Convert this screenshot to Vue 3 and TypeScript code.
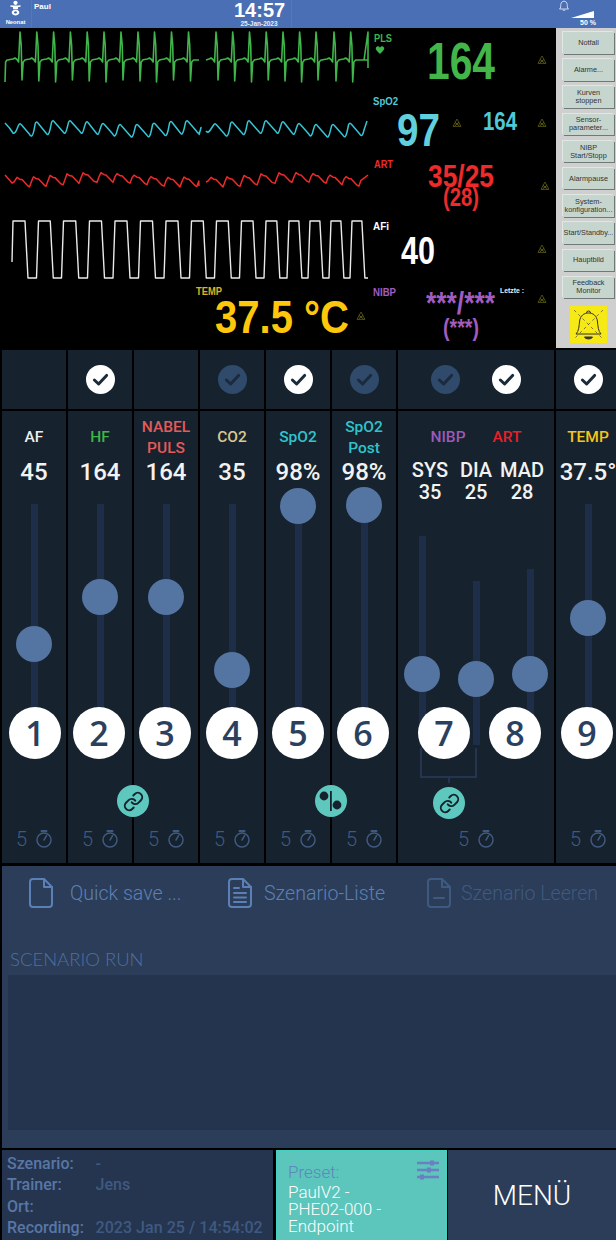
<template>
  <div class="page">
    <header class="topbar">
      <div class="patient">
        <svg class="baby" viewBox="0 0 16 18" fill="#fff">
          <circle cx="8" cy="2.6" r="2.6" />
          <path d="M2 5.6 L5 6 H11 L14 5.6 L14.6 7 L11 8.2 V10.4 H5 V8.2 L1.4 7 Z" />
          <path d="M8 11 a4.6 3.6 0 1 0 .01 0 Z M8 13 a1.8 1.4 0 1 1 -.01 0 Z" fill-rule="evenodd" />
        </svg>
        <span>Neonat</span>
      </div>
      <div class="pname">Paul</div>
      <div class="clock">
        <div class="time">14:57</div>
        <div class="date">25-Jan-2023</div>
      </div>
      <div class="volume">
        <svg class="bell" viewBox="0 0 12 12" fill="none" stroke="#dfe7f5" stroke-width="0.9">
          <path d="M1.5 9 C3 8 2.6 6 2.8 4.4 C3 2.4 4.4 1.2 6 1.2 C7.6 1.2 9 2.4 9.2 4.4 C9.4 6 9 8 10.5 9 Z" />
          <path d="M4.8 10.2 H7.2" />
        </svg>
        <svg class="vol" viewBox="0 0 23 7"><path d="M0 7 L23 0 V7 Z" fill="#fff" /></svg>
        <span>50 %</span>
      </div>
    </header>

    <section class="monitor">
      <svg class="screen" width="556" height="320" viewBox="0 28 556 320">
        <path v-for="w in waves" :key="w.key" :d="w.d" :stroke="w.color" :stroke-width="w.sw" fill="none" stroke-linejoin="round" />
        <path d="M376 47.5 c1.6 -2.4 4 -1.2 4 .6 c0 -1.8 2.4 -3 4 -.6 c1.2 2.2 -2.4 4.6 -4 6.4 c-1.6 -1.8 -5.2 -4.2 -4 -6.4 Z" fill="#3fb54a" />
        <text
          v-for="t in readouts"
          :key="t.text + t.x"
          :x="t.x"
          :y="t.y"
          :font-size="t.size"
          :fill="t.color"
          :textLength="t.width"
          lengthAdjust="spacingAndGlyphs"
          class="vital"
        >{{ t.text }}</text>
        <g v-for="a in alarmOff" :key="a[0] + '-' + a[1]" :transform="`translate(${a[0]} ${a[1]})`" fill="none" stroke="#6b6a18" stroke-width="0.7">
          <path d="M0 -4 L4 3.4 H-4 Z" />
          <path d="M-2.2 -1 L2.6 3.4 M2.2 -1 L-2.6 3.4 M-1.6 1 H1.6" />
        </g>
      </svg>
      <aside class="softkeys">
        <button v-for="k in softkeys" :key="k" class="softkey">{{ k }}</button>
        <div class="alarm-box">
          <svg viewBox="0 0 37 37" fill="none" stroke="#333" stroke-width="1">
            <path d="M4 4 L33 33 M33 4 L4 33" stroke-dasharray="3 3" stroke-width="0.6" />
            <path d="M6 28 C9 25 9 20 9.6 15 C10.4 9.6 14 7 18.5 7 C23 7 26.6 9.6 27.4 15 C28 20 28 25 31 28 Z" />
            <path d="M16.5 7 a2 2 0 0 1 4 0" />
            <path d="M14.5 31 H22.5 C21.5 33.6 15.5 33.6 14.5 31 Z" fill="#333" />
          </svg>
        </div>
      </aside>
    </section>

    <section class="mixer">
      <div v-for="c in cols" :key="'chk' + c.key" class="check-cell" :class="c.cls">
        <span v-for="(on, i) in c.checks" :key="i" class="check" :class="{ on }">
          <svg viewBox="0 0 29 29" fill="none" stroke-width="3" stroke-linecap="round" stroke-linejoin="round">
            <path d="M8.4 15 L12.6 19 L20.6 10.4" />
          </svg>
        </span>
      </div>

      <div v-for="c in cols" :key="c.key" class="col" :class="c.cls">
        <div class="head">
          <span v-for="l in c.labels" :key="l.text" class="label" :style="{ color: l.color }" v-html="l.text"></span>
        </div>
        <div class="vals">
          <div v-for="v in c.values" :key="v.value" class="val">
            <div v-if="v.name" class="val-name">{{ v.name }}</div>
            <div class="val-num" :class="{ small: v.name }">{{ v.value }}</div>
          </div>
        </div>
        <div class="tracks">
          <div v-for="t in c.tracks" :key="t.top" class="track" :style="{ height: 744 - t.top + 'px' }">
            <span class="thumb" :style="{ top: t.thumb - t.top - 18 + 'px' }"></span>
          </div>
        </div>
        <div class="foot">
          <span>5</span>
          <svg class="timer" viewBox="0 0 16 18" fill="none" stroke="#3f5a80" stroke-width="1.5" stroke-linecap="round">
            <circle cx="8" cy="10" r="7" />
            <path d="M5.4 1 H10.6" stroke-width="1.8" />
            <path d="M8 10 L10.6 5.6" />
          </svg>
        </div>
        <span v-for="m in c.marks" :key="m.n" class="mark" :style="{ left: m.left + 'px' }">{{ m.n }}</span>
      </div>

      <div class="bracket"></div>
      <span class="pill pill-hf">
        <svg viewBox="0 0 24 24" fill="none" stroke="#16222d" stroke-width="2.2" stroke-linecap="round" stroke-linejoin="round"><path d="M10 13a5 5 0 0 0 7.54.54l3-3a5 5 0 0 0-7.07-7.07l-1.72 1.71" /><path d="M14 11a5 5 0 0 0-7.54-.54l-3 3a5 5 0 0 0 7.07 7.07l1.71-1.71" /></svg>
      </span>
      <span class="pill pill-spo2">
        <svg viewBox="0 0 32 32" fill="#16222d"><circle cx="9" cy="11" r="4.4" /><circle cx="22" cy="20" r="4.4" /><rect x="15" y="6" width="1.8" height="20" /></svg>
      </span>
      <span class="pill pill-nibp">
        <svg viewBox="0 0 24 24" fill="none" stroke="#16222d" stroke-width="2.2" stroke-linecap="round" stroke-linejoin="round"><path d="M10 13a5 5 0 0 0 7.54.54l3-3a5 5 0 0 0-7.07-7.07l-1.72 1.71" /><path d="M14 11a5 5 0 0 0-7.54-.54l-3 3a5 5 0 0 0 7.07 7.07l1.71-1.71" /></svg>
      </span>
    </section>

    <section class="scenario">
      <div class="actions">
        <div v-for="a in actions" :key="a.label" class="action" :class="{ dim: a.dim }">
          <svg viewBox="0 0 24 30" fill="none" stroke="currentColor" stroke-width="2" stroke-linejoin="round" stroke-linecap="round">
            <path d="M15 1 H4 a3 3 0 0 0 -3 3 V26 a3 3 0 0 0 3 3 H20 a3 3 0 0 0 3 -3 V9 Z" />
            <path d="M15 1 V9 H23" />
            <path v-if="a.kind === 'list'" d="M6 10 H11 M6 15 H18 M6 19.5 H18 M6 24 H18" />
            <path v-if="a.kind === 'clear'" d="M7 20 H17" />
          </svg>
          <span>{{ a.label }}</span>
        </div>
      </div>
      <div class="run-title">SCENARIO RUN</div>
      <div class="run-box"></div>
    </section>

    <footer class="bottom">
      <div class="info">
        <template v-for="r in info" :key="r[0]">
          <span class="info-key">{{ r[0] }}</span>
          <span class="info-val">{{ r[1] }}</span>
        </template>
      </div>
      <div class="preset">
        <div class="preset-head">
          <span>Preset:</span>
          <svg viewBox="0 0 22 20" fill="none" stroke="#6a80c0" stroke-width="2.4">
            <path d="M0 3 H22 M0 10 H22 M0 17 H22" />
            <path d="M15 0.5 V5.5 M12 7.5 V12.5 M5 14.5 V19.5" stroke-width="4" />
          </svg>
        </div>
        <div class="preset-name">PaulV2 -<br />PHE02-000 -<br />Endpoint</div>
      </div>
      <div class="menu">MENÜ</div>
    </footer>
  </div>
</template>

<script setup lang="ts">
interface Label { text: string; color: string }
interface Value { name?: string; value: string }
interface Track { top: number; thumb: number }
interface Mark { n: number; left: number }
interface Col {
  key: string
  cls?: string
  checks: boolean[]
  labels: Label[]
  values: Value[]
  tracks: Track[]
  marks: Mark[]
}

const GREEN = '#3fb54a'
const CYAN = '#2fc4cc'

const cols: Col[] = [
  { key: 'af', checks: [], labels: [{ text: 'AF', color: '#eee' }], values: [{ value: '45' }], tracks: [{ top: 504, thumb: 644 }], marks: [{ n: 1, left: 7 }] },
  { key: 'hf', checks: [true], labels: [{ text: 'HF', color: GREEN }], values: [{ value: '164' }], tracks: [{ top: 504, thumb: 597 }], marks: [{ n: 2, left: 5 }] },
  { key: 'nabel', checks: [], labels: [{ text: 'NABEL<br>PULS', color: '#e35b5b' }], values: [{ value: '164' }], tracks: [{ top: 504, thumb: 597 }], marks: [{ n: 3, left: 5 }] },
  { key: 'co2', checks: [false], labels: [{ text: 'CO2', color: '#d9c88f' }], values: [{ value: '35' }], tracks: [{ top: 504, thumb: 670 }], marks: [{ n: 4, left: 6 }] },
  { key: 'spo2', checks: [true], labels: [{ text: 'SpO2', color: CYAN }], values: [{ value: '98%' }], tracks: [{ top: 504, thumb: 506 }], marks: [{ n: 5, left: 6 }] },
  { key: 'post', checks: [false], labels: [{ text: 'SpO2<br>Post', color: CYAN }], values: [{ value: '98%' }], tracks: [{ top: 504, thumb: 505 }], marks: [{ n: 6, left: 5 }] },
  {
    key: 'bp',
    cls: 'group',
    checks: [false, true],
    labels: [{ text: 'NIBP', color: '#9c5ab8' }, { text: 'ART', color: '#e8202a' }],
    values: [{ name: 'SYS', value: '35' }, { name: 'DIA', value: '25' }, { name: 'MAD', value: '28' }],
    tracks: [{ top: 535, thumb: 673 }, { top: 580, thumb: 678 }, { top: 568, thumb: 673 }],
    marks: [{ n: 7, left: 20 }, { n: 8, left: 91 }],
  },
  { key: 'temp', cls: 'last', checks: [true], labels: [{ text: 'TEMP', color: '#f5c518' }], values: [{ value: '37.5°' }], tracks: [{ top: 504, thumb: 618 }], marks: [{ n: 9, left: 5 }] },
]

const softkeys = [
  'Notfall', 'Alarme...', 'Kurven stoppen', 'Sensor-parameter...', 'NIBP Start/Stopp',
  'Alarmpause', 'System-konfiguration...', 'Start/Standby...', 'Hauptbild', 'Feedback Monitor',
]

const actions = [
  { label: 'Quick save ...', kind: 'plain', dim: false },
  { label: 'Szenario-Liste', kind: 'list', dim: false },
  { label: 'Szenario Leeren', kind: 'clear', dim: true },
]

const info = [
  ['Szenario:', '-'],
  ['Trainer:', 'Jens'],
  ['Ort:', ''],
  ['Recording:', '2023 Jan 25 / 14:54:02'],
]

const readouts = [
  { text: 'PLS', x: 374, y: 41.5, size: 11, width: 18, color: GREEN },
  { text: '164', x: 427, y: 79, size: 52, width: 68, color: '#43b649' },
  { text: 'SpO2', x: 373, y: 105, size: 11, width: 25, color: '#4fc9d9' },
  { text: '97', x: 397, y: 146, size: 47, width: 43, color: '#62cfdc' },
  { text: '164', x: 483, y: 129.5, size: 25, width: 34, color: '#4fc9d9' },
  { text: 'ART', x: 374, y: 167.5, size: 11, width: 19, color: '#ee2a2a' },
  { text: '35/25', x: 428, y: 187, size: 31, width: 66, color: '#ee2a2a' },
  { text: '(28)', x: 443, y: 206, size: 25, width: 36, color: '#ee2a2a' },
  { text: 'AFi', x: 373, y: 230, size: 11, width: 16, color: '#fff' },
  { text: '40', x: 401, y: 264, size: 39, width: 34, color: '#fff' },
  { text: 'NIBP', x: 373, y: 295.5, size: 11, width: 23, color: '#a05cc0' },
  { text: '***/***', x: 426, y: 314, size: 31, width: 69, color: '#a05cc0' },
  { text: '(***)', x: 443, y: 336, size: 24, width: 36, color: '#a05cc0' },
  { text: 'Letzte :', x: 500, y: 293, size: 7, width: 24, color: '#eee' },
  { text: 'TEMP', x: 196, y: 295, size: 10, width: 26, color: '#e0b020' },
  { text: '37.5 °C', x: 215, y: 333, size: 47, width: 134, color: '#fdc70c' },
]

const alarmOff: [number, number][] = [[542, 60], [457, 123], [542, 123], [545, 186], [542, 249], [542, 299], [361, 316]]

// ECG trace: flat baseline with a sharp up/down spike per beat
const ecg = (start: number, end: number, beats: number[], first: string) => {
  let d = first
  beats.forEach((b, i) => {
    const low = 80 + ((i * 7) % 3)
    if (b - 12 > start) d += ` L${b - 12} 60 L${b - 10} 59.5`
    d += ` L${b - 7} 59 L${b - 5} 58 L${b - 3} 59.5 L${b - 1.4} 62 L${b} 32 L${b + 1.2} 45`
    d += ` L${b + 2} ${low} L${b + 3.2} 62 L${b + 5} 60`
  })
  if (end > beats[beats.length - 1] + 5) d += ` L${end} 60`
  return d
}

// pleth trace: pointed wave that drifts up and down slowly
const pleth = (peaks: number[], first: string, end: string) => {
  let d = first
  peaks.forEach((p, i) => {
    const top = 123 + Math.sin(i * 0.82 + 2.6) * 2
    const next = peaks[i + 1] ?? p + 16.8
    d += ` L${p - 1.4} ${top + 1} Q${p} ${top - 1.6} ${p + 1.4} ${top + 0.8} L${next - 7} ${top + 10.5}`
    d += ` Q${next - 4.6} ${top + 15} ${next - 2.8} ${top + 6.5}`
  })
  return d + ' ' + end
}

// arterial trace: fast rise, small notch, then a long fall
const art = (peaks: number[], first: string, end: string) => {
  let d = first
  peaks.forEach((p, i) => {
    const drift = Math.sin(i * 0.68 + 1.6) * 2.4
    const top = 175 + drift
    const next = peaks[i + 1] ?? p + 16.8
    d += ` L${p} ${top} L${p + 3} ${top + 2} L${p + 5} ${top + 2.2} L${p + 11} ${top + 8.5} L${next - 4} ${top + 9.5} L${next - 2} ${top + 4}`
  })
  return d + ' ' + end
}

// breathing trace: trapezoid pulses
const resp = () => {
  const rises = [13, 38.5, 63.5, 89.5, 115, 140.5, 166, 191.5, 216.5, 241.5, 266, 289, 310, 331, 352]
  let d = 'M12 262 L13 221'
  rises.forEach((r, i) => {
    const period = (rises[i + 1] ?? r + 21) - r
    const topW = period * 0.47
    d += ` L${r + 0.5} 221 L${r + topW} 221 L${r + topW + 3} 278`
    if (rises[i + 1]) d += ` L${rises[i + 1] - 2} 278 L${rises[i + 1]} 221`
  })
  return d + ' L368 278'
}

const waves = [
  { key: 'ecg1', color: '#3fb54a', sw: 1.6, d: ecg(5, 199, [20, 36.8, 53.6, 70.4, 87.2, 104, 121, 138, 154.5, 171.5, 188.5], 'M5 82 L5.6 62 L7 60') },
  { key: 'ecg2', color: '#3fb54a', sw: 1.6, d: ecg(206, 368, [216, 232.7, 249.5, 266.2, 283, 299.6, 316, 334, 350.7], 'M206 60') + ' L364 60 L368 32 L368 68' },
  { key: 'pl1', color: '#36c5d6', sw: 1.5, d: pleth([20, 36.7, 53, 70, 87, 103, 120, 137, 154, 171, 187], 'M5 123 Q10 128 13 133 Q15 134 17 129', 'L199 135') },
  { key: 'pl2', color: '#36c5d6', sw: 1.5, d: pleth([215, 232, 249, 266, 283, 299, 316, 333, 350], 'M206 131 Q208 134 211 129', 'L367 121') },
  { key: 'ar1', color: '#ee2a2a', sw: 1.5, d: art([17, 33.5, 50, 67, 83, 101, 117, 134, 151, 168, 184], 'M5 175 L12 183 L14 182', 'L199 186') },
  { key: 'ar2', color: '#ee2a2a', sw: 1.5, d: art([211, 227, 244, 261, 279, 296, 313, 330, 346], 'M206 182 L208 181', 'L368 175') },
  { key: 'resp', color: '#eaeaea', sw: 1.4, d: resp() },
]
</script>

<style>
html, body { margin: 0; background: #000; }
</style>

<style scoped>
.page {
  width: 616px;
  height: 1240px;
  background: #000;
  font-family: Roboto, "Liberation Sans", sans-serif;
  overflow: hidden;
}

/* monitor header */
.topbar {
  height: 28px;
  box-sizing: border-box;
  background: #4a6fb5;
  display: flex;
  color: #fff;
  position: relative;
}
.patient {
  width: 32px;
  box-sizing: border-box;
  border-right: 1px solid #5478bb;
  display: flex;
  flex-direction: column;
  align-items: center;
  font: bold 5.8px "Liberation Sans", sans-serif;
}
.baby { width: 13px; height: 16px; margin-bottom: 3px; }
.pname { font: bold 8px "Liberation Sans", sans-serif; padding: 2px 0 0 2px; width: 200px; }
.clock {
  width: 58px;
  box-sizing: border-box;
  padding-right: 7px;
  border-right: 1px solid #5478bb;
  text-align: center;
}
.time { font: bold 20px/20px "Liberation Sans", sans-serif; }
.date { font: bold 6.5px/8px "Liberation Sans", sans-serif; white-space: nowrap; margin: 0 -6px; color: #e8eefa; }
.volume {
  margin-left: auto;
  width: 60px;
  display: flex;
  flex-direction: column;
  align-items: flex-end;
  font: bold 7px/8px "Liberation Sans", sans-serif;
  padding-right: 22px;
  box-sizing: border-box;
  position: relative;
}
.bell { width: 12px; height: 12px; position: absolute; left: 2px; top: 0; }
.vol { width: 23px; height: 7px; margin: 11px 0 1px 0; display: block; }
.volume span { margin-right: -2px; }

/* monitor body */
.monitor {
  height: 320px;
  display: flex;
  margin-bottom: 2px;
}
.screen { display: block; flex: none; }
.vital { font-family: "Liberation Sans Narrow", "Liberation Sans", sans-serif; font-weight: 700; }
.softkeys {
  width: 60px;
  height: 320px;
  background: #cfcfcf;
  box-sizing: border-box;
  padding: 4px 2px 0 7px;
  display: flex;
  flex-direction: column;
  gap: 5.7px;
}
.softkey {
  height: 21.5px;
  padding: 0;
  border: 0;
  flex: none;
  background: #c6d6cf;
  box-shadow: 1px 1px 0 #6f7a76, -1px -1px 0 #e0e8e4;
  font: 7.3px/8px "Liberation Sans", sans-serif;
  color: #333;
  overflow: hidden;
}
.alarm-box {
  width: 37px;
  height: 37px;
  margin: 2px 0 0 7px;
  background: #f6e916;
}
.alarm-box svg { display: block; }

/* sliders */
.mixer {
  display: grid;
  grid-template-columns: repeat(6, 64px) 156px 60px;
  grid-template-rows: 59px 452px;
  gap: 2px;
  padding: 0 0 0 2px;
  position: relative;
  height: 516px;
  box-sizing: border-box;
}
.check-cell {
  background: #16222d;
  display: flex;
  align-items: center;
  justify-content: center;
  gap: 32px;
}
.check-cell.last { padding-left: 4px; }
.check {
  width: 29px;
  height: 29px;
  border-radius: 50%;
  background: #2f4a6b;
  stroke: #1b2a3d;
}
.check.on { background: #fff; stroke: #1c2b3a; }
.check svg { display: block; stroke: inherit; }

.col {
  background: #16222d;
  position: relative;
  display: flex;
  flex-direction: column;
  align-items: center;
}
.col.last { padding-left: 4px; }
.head {
  height: 41px;
  margin-top: 6px;
  display: flex;
  align-items: center;
  justify-content: center;
  gap: 27px;
}
.label {
  font-size: 15.5px;
  font-weight: 500;
  line-height: 20.5px;
  text-align: center;
}
.vals { display: flex; height: 28px; }
.val { text-align: center; white-space: nowrap; }
.group .val { width: 46px; }
.val-num {
  font-size: 24px;
  font-weight: 500;
  line-height: 28px;
  color: #f2f2f2;
}
.val-name, .val-num.small {
  font-size: 20px;
  line-height: 22px;
  font-weight: 500;
  color: #f2f2f2;
}
.group .vals { margin-top: 1px; }
.tracks {
  height: 240px;
  margin-top: 18px;
  display: flex;
  align-items: flex-end;
  gap: 47px;
}
.track {
  width: 7px;
  background: #1f2e48;
  position: relative;
}
.thumb {
  position: absolute;
  left: -14.5px;
  width: 36px;
  height: 36px;
  border-radius: 50%;
  background: #5474a2;
}
.foot {
  margin-top: auto;
  height: 24px;
  padding-bottom: 12px;
  display: flex;
  align-items: center;
  gap: 9px;
  color: #3f5a80;
  font-size: 20px;
  font-weight: 300;
}
.timer { width: 16px; height: 18px; }
.mark {
  position: absolute;
  top: 296px;
  width: 52px;
  height: 52px;
  border-radius: 50%;
  background: #fff;
  color: #2b3f5f;
  font: 600 34px/52px "Open Sans", sans-serif;
  text-align: center;
}
.bracket {
  position: absolute;
  left: 420px;
  top: 398px;
  width: 53px;
  height: 28px;
  border: 2px solid #253550;
  border-top: 0;
}
.bracket::after {
  content: '';
  position: absolute;
  left: 26px;
  top: 28px;
  width: 2px;
  height: 7px;
  background: #253550;
}
.pill {
  position: absolute;
  width: 32px;
  height: 32px;
  border-radius: 50%;
  background: #5ec8be;
  display: flex;
  align-items: center;
  justify-content: center;
}
.pill svg { width: 21px; height: 21px; }
.pill-hf { left: 117px; top: 435px; }
.pill-spo2 { left: 315px; top: 435px; }
.pill-spo2 svg { width: 32px; height: 32px; }
.pill-nibp { left: 433px; top: 437px; }

/* scenario */
.scenario {
  height: 282px;
  margin-left: 2px;
  background: #2b3d58;
  box-sizing: border-box;
  padding-top: 12px;
}
.actions { display: flex; height: 30px; }
.action {
  width: 199px;
  box-sizing: border-box;
  padding-left: 27px;
  display: flex;
  align-items: center;
  gap: 17px;
  color: #5b80b5;
  font-size: 19.6px;
  font-weight: 300;
  white-space: nowrap;
}
.action:nth-child(2) { gap: 12px; }
.action:nth-child(3) { gap: 10px; }
.action svg { width: 24px; height: 30px; flex: none; }
.action.dim { color: #3f5a80; }
.run-title {
  margin: 39px 0 0 8px;
  height: 28px;
  font: 300 18.5px/24px Lato, sans-serif;
  color: #4f70a0;
}
.run-box {
  height: 155px;
  margin-left: 6px;
  background: #25344e;
}

/* bottom bar */
.bottom {
  height: 90px;
  margin-top: 2px;
  padding-left: 2px;
  display: flex;
  gap: 3px;
}
.info {
  width: 271px;
  box-sizing: border-box;
  background: #253550;
  padding: 3px 0 0 5px;
  display: grid;
  grid-template-columns: 88.5px 1fr;
  grid-auto-rows: 21.3px;
  align-items: center;
  font-size: 16px;
  font-weight: 500;
  white-space: nowrap;
}
.info-key { color: #5877a5; }
.info-val { color: #3f5a80; letter-spacing: 0.05px; }
.preset {
  width: 171px;
  box-sizing: border-box;
  background: #5cc5bc;
  border: 1px solid #45d0c0;
  padding: 9px 7px 0 11px;
  color: #fff;
  font-size: 17px;
  font-weight: 300;
  line-height: 17px;
}
.preset-head {
  display: flex;
  justify-content: space-between;
  align-items: flex-start;
  color: #5f86bd;
  height: 24px;
}
.preset-head span { padding-top: 4px; }
.preset-head svg { width: 22px; height: 20px; }
.preset-name { white-space: nowrap; }
.menu {
  width: 168px;
  margin-left: -2px;
  background: #2b3d58;
  color: #fff;
  font-size: 28px;
  font-weight: 300;
  display: flex;
  align-items: center;
  justify-content: center;
}
</style>
